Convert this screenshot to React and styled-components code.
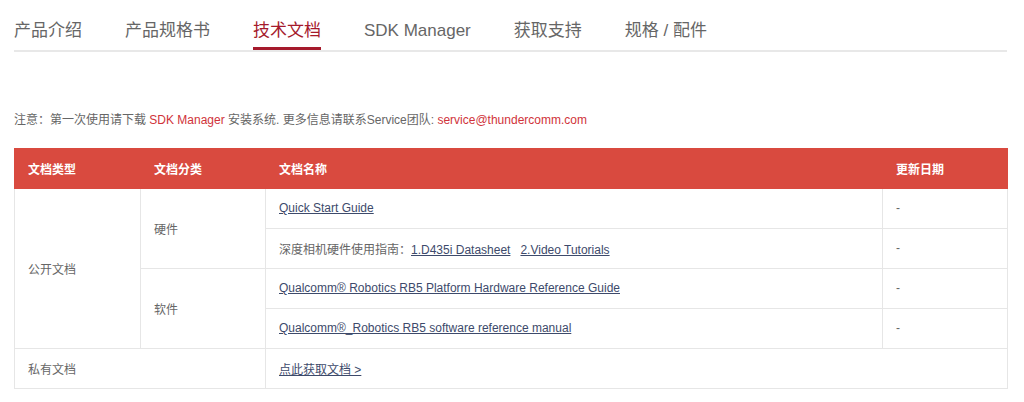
import React from "react";
import styled, { createGlobalStyle } from "styled-components";

const Global = createGlobalStyle`
  html, body { margin: 0; padding: 0; background: #fff; }
  body { font-family: "Liberation Sans", "Noto Sans CJK SC", sans-serif; }
`;

const Page = styled.div`
  width: 993px;
  padding: 0 17px 0 14px;
`;

const Nav = styled.nav`
  display: flex;
  gap: 43px;
  border-bottom: 2px solid #e8e8e8;
`;

const Tab = styled.a`
  display: block;
  box-sizing: border-box;
  height: 50px;
  padding-top: 21px;
  line-height: 20px;
  font-size: 17px;
  color: ${(p) => (p.$active ? "#a51a2c" : "#666")};
  border-bottom: 3px solid ${(p) => (p.$active ? "#a51a2c" : "transparent")};
  text-decoration: none;
  white-space: nowrap;
`;

const Note = styled.p`
  margin: 58px 0 18px;
  font-size: 12px;
  line-height: 20px;
  color: #666;
`;

const Red = styled.span`
  color: #d0333a;
`;

const Table = styled.table`
  width: 993px;
  border-collapse: collapse;
  table-layout: fixed;
  font-size: 12px;
`;

const Row = styled.tr`
  height: 40px;
`;

const Th = styled.th`
  padding: 0 13px;
  background: #d94a3f;
  color: #fff;
  font-weight: bold;
  text-align: left;
  border: 1px solid #d94a3f;
  border-left: ${(p) => (p.$first ? "1px solid #d94a3f" : "1px solid #dd5a50")};
`;

const Td = styled.td`
  padding: 0 13px 1px;
  color: #666;
  border: 1px solid #e6e6e6;
  vertical-align: middle;
`;

const Link = styled.a`
  color: #3d4a6b;
  text-decoration: underline;
  margin-left: ${(p) => p.$gap || 0}px;
`;

export default function App() {
  const tabs = ["产品介绍", "产品规格书", "技术文档", "SDK Manager", "获取支持", "规格 / 配件"];
  return (
    <Page>
      <Global />
      <Nav>
        {tabs.map((t) => (
          <Tab key={t} $active={t === "技术文档"}>{t}</Tab>
        ))}
      </Nav>
      <Note>
        注意：第一次使用请下载 <Red>SDK Manager</Red> 安装系统. 更多信息请联系Service团队: <Red>service@thundercomm.com</Red>
      </Note>
      <Table>
        <colgroup>
          <col style={{ width: 126 }} />
          <col style={{ width: 125 }} />
          <col style={{ width: 617 }} />
          <col style={{ width: 125 }} />
        </colgroup>
        <thead>
          <Row>
            <Th $first>文档类型</Th>
            <Th>文档分类</Th>
            <Th>文档名称</Th>
            <Th>更新日期</Th>
          </Row>
        </thead>
        <tbody>
          <Row>
            <Td rowSpan={4}>公开文档</Td>
            <Td rowSpan={2}>硬件</Td>
            <Td><Link>Quick Start Guide</Link></Td>
            <Td>-</Td>
          </Row>
          <Row>
            <Td>
              深度相机硬件使用指南：<Link>1.D435i Datasheet</Link>
              <Link $gap={10}>2.Video Tutorials</Link>
            </Td>
            <Td>-</Td>
          </Row>
          <Row>
            <Td rowSpan={2}>软件</Td>
            <Td><Link>Qualcomm® Robotics RB5 Platform Hardware Reference Guide</Link></Td>
            <Td>-</Td>
          </Row>
          <Row>
            <Td><Link>Qualcomm®_Robotics RB5 software reference manual</Link></Td>
            <Td>-</Td>
          </Row>
          <Row>
            <Td colSpan={2}>私有文档</Td>
            <Td colSpan={2}><Link>点此获取文档 &gt;</Link></Td>
          </Row>
        </tbody>
      </Table>
    </Page>
  );
}
